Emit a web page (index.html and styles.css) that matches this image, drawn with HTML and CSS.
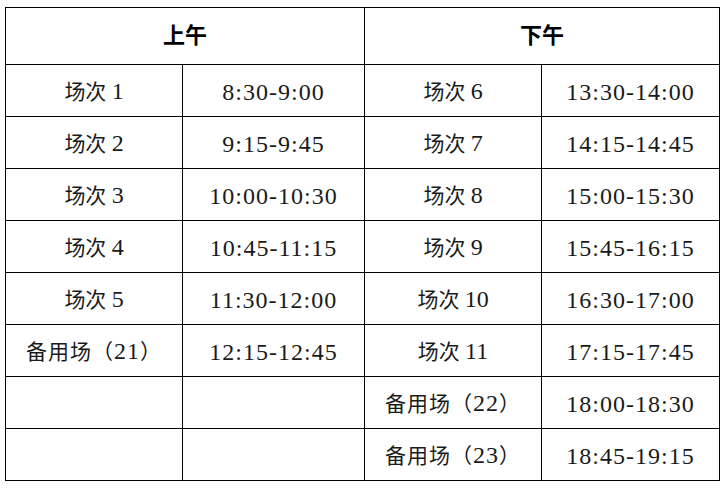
FILE: index.html
```html
<!DOCTYPE html>
<html lang="zh">
<head>
<meta charset="utf-8">
<link rel="stylesheet" href="styles.css">
</head>
<body>
<table class="sched">
  <colgroup>
    <col class="c1"><col class="c2"><col class="c3"><col class="c4">
  </colgroup>
  <thead>
    <tr class="head"><th colspan="2">上午</th><th colspan="2">下午</th></tr>
  </thead>
  <tbody>
    <tr><td>场次 <span class="n">1</span></td><td class="t">8:30-9:00</td><td>场次 <span class="n">6</span></td><td class="t">13:30-14:00</td></tr>
    <tr><td>场次 <span class="n">2</span></td><td class="t">9:15-9:45</td><td>场次 <span class="n">7</span></td><td class="t">14:15-14:45</td></tr>
    <tr><td>场次 <span class="n">3</span></td><td class="t">10:00-10:30</td><td>场次 <span class="n">8</span></td><td class="t">15:00-15:30</td></tr>
    <tr><td>场次 <span class="n">4</span></td><td class="t">10:45-11:15</td><td>场次 <span class="n">9</span></td><td class="t">15:45-16:15</td></tr>
    <tr><td>场次 <span class="n">5</span></td><td class="t">11:30-12:00</td><td>场次 <span class="n">10</span></td><td class="t">16:30-17:00</td></tr>
    <tr><td><span class="w">备用场（<span class="n">21</span>）</span></td><td class="t">12:15-12:45</td><td>场次 <span class="n">11</span></td><td class="t">17:15-17:45</td></tr>
    <tr><td></td><td></td><td><span class="w">备用场（<span class="n">22</span>）</span></td><td class="t">18:00-18:30</td></tr>
    <tr><td></td><td></td><td><span class="w">备用场（<span class="n">23</span>）</span></td><td class="t">18:45-19:15</td></tr>
  </tbody>
</table>
</body>
</html>
```
FILE: styles.css
```css
html, body {
  margin: 0;
  padding: 0;
  background: #fff;
}
body {
  padding: 7px 0 0 5px;
}
.sched {
  border-collapse: collapse;
  table-layout: fixed;
  width: 714px;
  font-family: "Liberation Serif", "Noto Sans CJK SC", serif;
  color: #1a1a1a;
}
.c1 { width: 177px; }
.c2 { width: 182px; }
.c3 { width: 177px; }
.c4 { width: 178px; }
.sched th, .sched td {
  border: 1.5px solid #000;
  text-align: center;
  padding: 0;
}
.sched th {
  height: 50px;
  padding-bottom: 6px;
  font-family: "Noto Sans CJK SC", sans-serif;
  font-weight: 700;
  font-size: 22px;
  color: #000;
}
.sched td {
  height: 49px;
  padding-top: 2px;
  font-size: 21px;
  line-height: 24px;
  font-weight: 400;
}
.sched td.t {
  font-size: 24px;
  letter-spacing: 1px;
}
.n {
  font-size: 24px;
}
.w {
  letter-spacing: 1px;
}
```
